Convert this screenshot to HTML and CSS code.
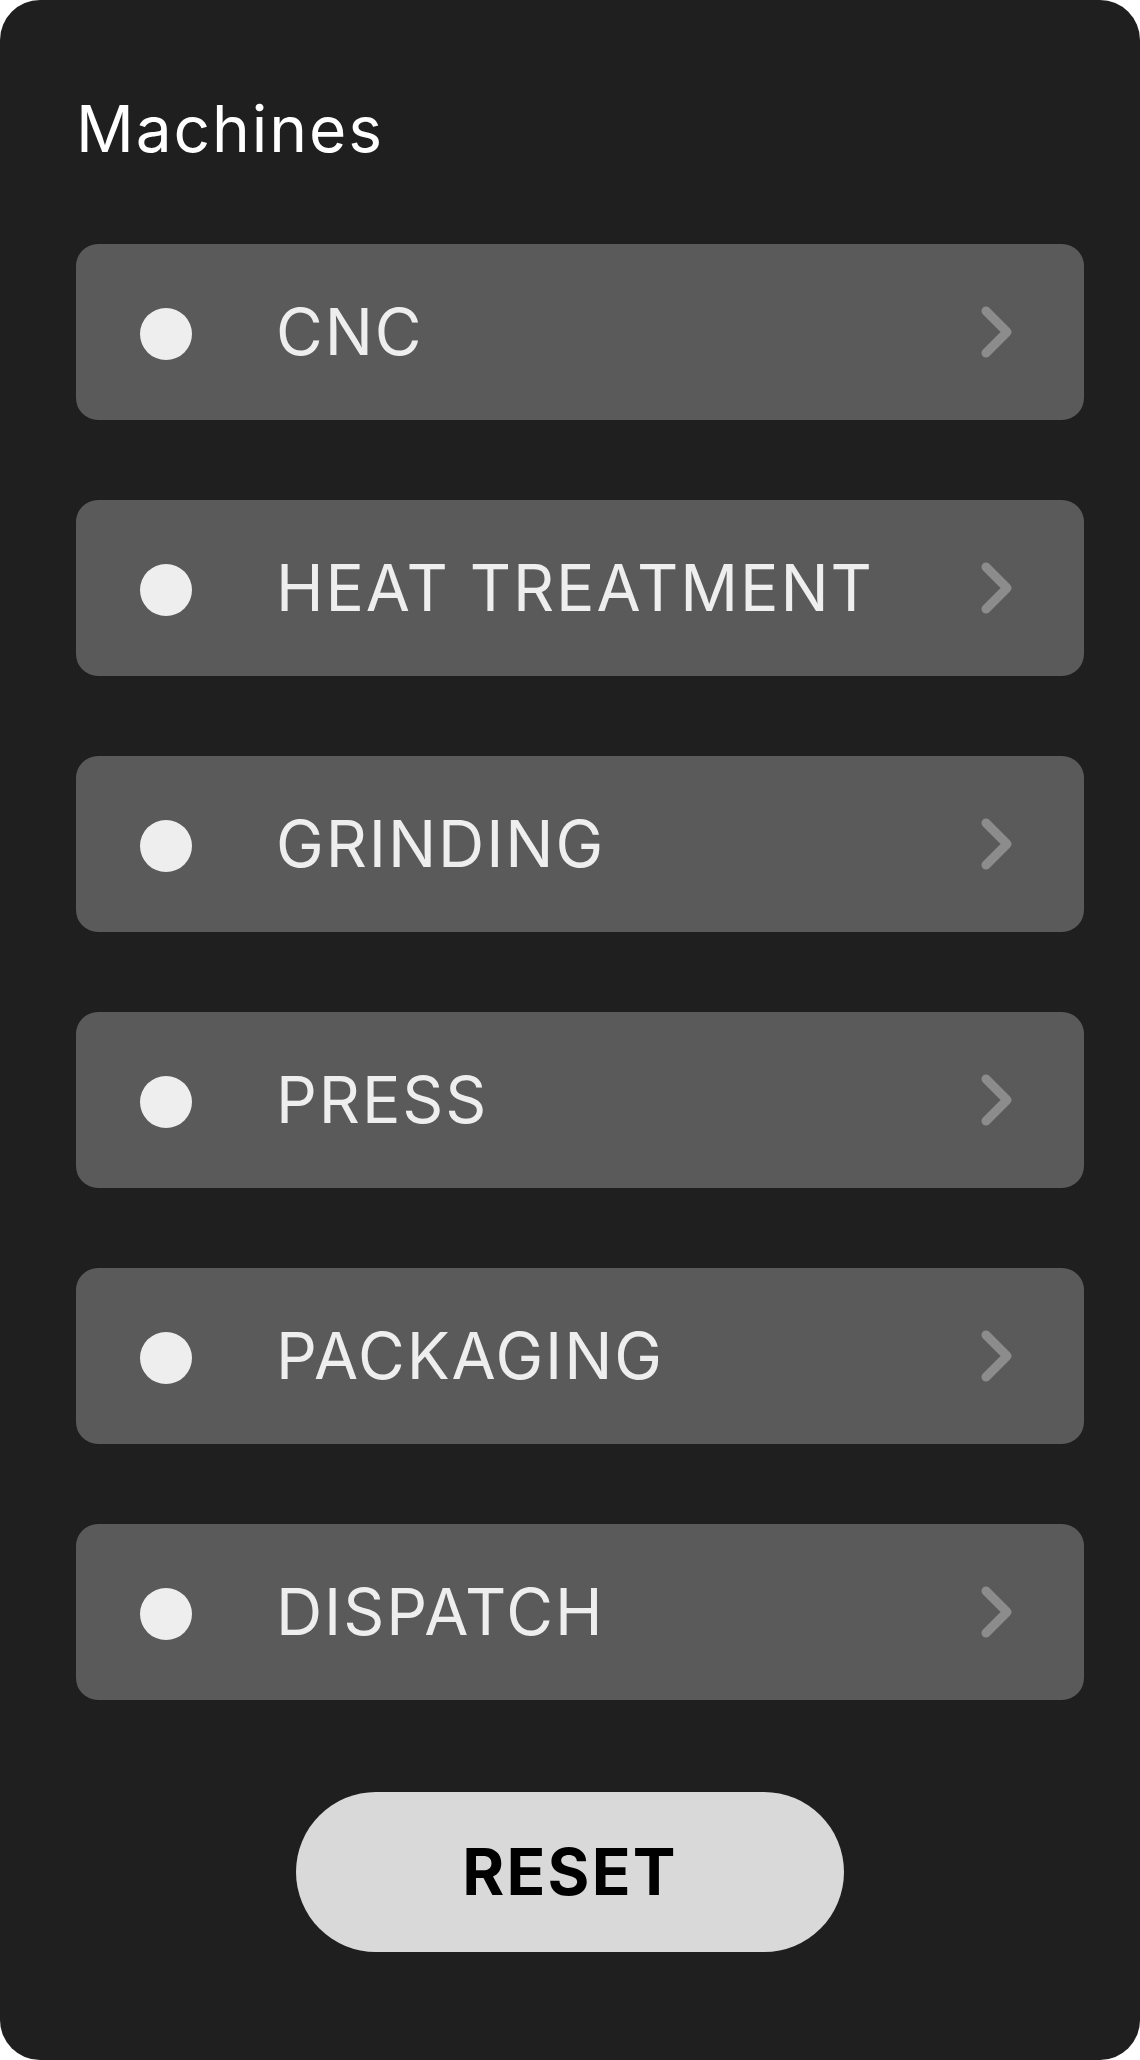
FILE: index.html
```html
<!DOCTYPE html>
<html lang="en">
<head>
<meta charset="utf-8">
<title>Machines</title>
<link rel="stylesheet" href="styles.css">
</head>
<body>
<main class="panel">
  <h1 class="panel-title">Machines</h1>
  <ul class="machine-list">
    <li class="machine-row">
      <span class="status-dot"></span>
      <span class="machine-name">CNC</span>
      <svg class="chevron" viewBox="0 0 32 52" width="32" height="52"><path d="M5 5 L26 26 L5 47"/></svg>
    </li>
    <li class="machine-row">
      <span class="status-dot"></span>
      <span class="machine-name">HEAT TREATMENT</span>
      <svg class="chevron" viewBox="0 0 32 52" width="32" height="52"><path d="M5 5 L26 26 L5 47"/></svg>
    </li>
    <li class="machine-row">
      <span class="status-dot"></span>
      <span class="machine-name">GRINDING</span>
      <svg class="chevron" viewBox="0 0 32 52" width="32" height="52"><path d="M5 5 L26 26 L5 47"/></svg>
    </li>
    <li class="machine-row">
      <span class="status-dot"></span>
      <span class="machine-name">PRESS</span>
      <svg class="chevron" viewBox="0 0 32 52" width="32" height="52"><path d="M5 5 L26 26 L5 47"/></svg>
    </li>
    <li class="machine-row">
      <span class="status-dot"></span>
      <span class="machine-name">PACKAGING</span>
      <svg class="chevron" viewBox="0 0 32 52" width="32" height="52"><path d="M5 5 L26 26 L5 47"/></svg>
    </li>
    <li class="machine-row">
      <span class="status-dot"></span>
      <span class="machine-name">DISPATCH</span>
      <svg class="chevron" viewBox="0 0 32 52" width="32" height="52"><path d="M5 5 L26 26 L5 47"/></svg>
    </li>
  </ul>
  <div class="panel-footer">
    <button class="reset-button" type="button">RESET</button>
  </div>
</main>
</body>
</html>
```
FILE: styles.css
```css
* {
  box-sizing: border-box;
}

html, body {
  margin: 0;
  padding: 0;
  background: #ffffff;
}

body {
  font-family: Inter, "Noto Sans", "Liberation Sans", sans-serif;
}

.panel {
  width: 1140px;
  height: 2060px;
  background: #1f1f1f;
  border-radius: 40px;
  padding-top: 97px;
  display: flex;
  flex-direction: column;
}

.panel-title {
  margin: 0 0 83px 0;
  padding: 0 56px 0 76px;
  font-size: 64px;
  line-height: 64px;
  font-weight: 400;
  color: #ffffff;
  letter-spacing: 0.03em;
}

.machine-list {
  list-style: none;
  margin: 0;
  padding: 0 56px 0 76px;
  display: flex;
  flex-direction: column;
  gap: 80px;
}

.machine-row {
  height: 176px;
  background: #5a5a5a;
  border-radius: 22px;
  display: flex;
  align-items: center;
  padding: 0 71px 0 64px;
}

.status-dot {
  width: 52px;
  height: 52px;
  border-radius: 50%;
  background: #eeeeee;
  flex: none;
  margin-top: 4px;
}

.machine-name {
  flex: 1;
  margin-left: 84px;
  font-size: 64px;
  line-height: 64px;
  color: #eeeeee;
  letter-spacing: 0.03em;
  white-space: nowrap;
}

.chevron {
  flex: none;
  display: block;
}

.chevron path {
  fill: none;
  stroke: #8c8c8c;
  stroke-width: 9;
  stroke-linecap: round;
  stroke-linejoin: round;
}

.panel-footer {
  display: flex;
  justify-content: center;
  margin-top: 92px;
}

.reset-button {
  width: 548px;
  height: 160px;
  border: none;
  border-radius: 80px;
  background: #d9d9d9;
  color: #000000;
  font-family: Inter, "Noto Sans", "Liberation Sans", sans-serif;
  font-size: 64px;
  line-height: 64px;
  font-weight: 700;
  letter-spacing: 0.035em;
  padding: 0;
}
```
